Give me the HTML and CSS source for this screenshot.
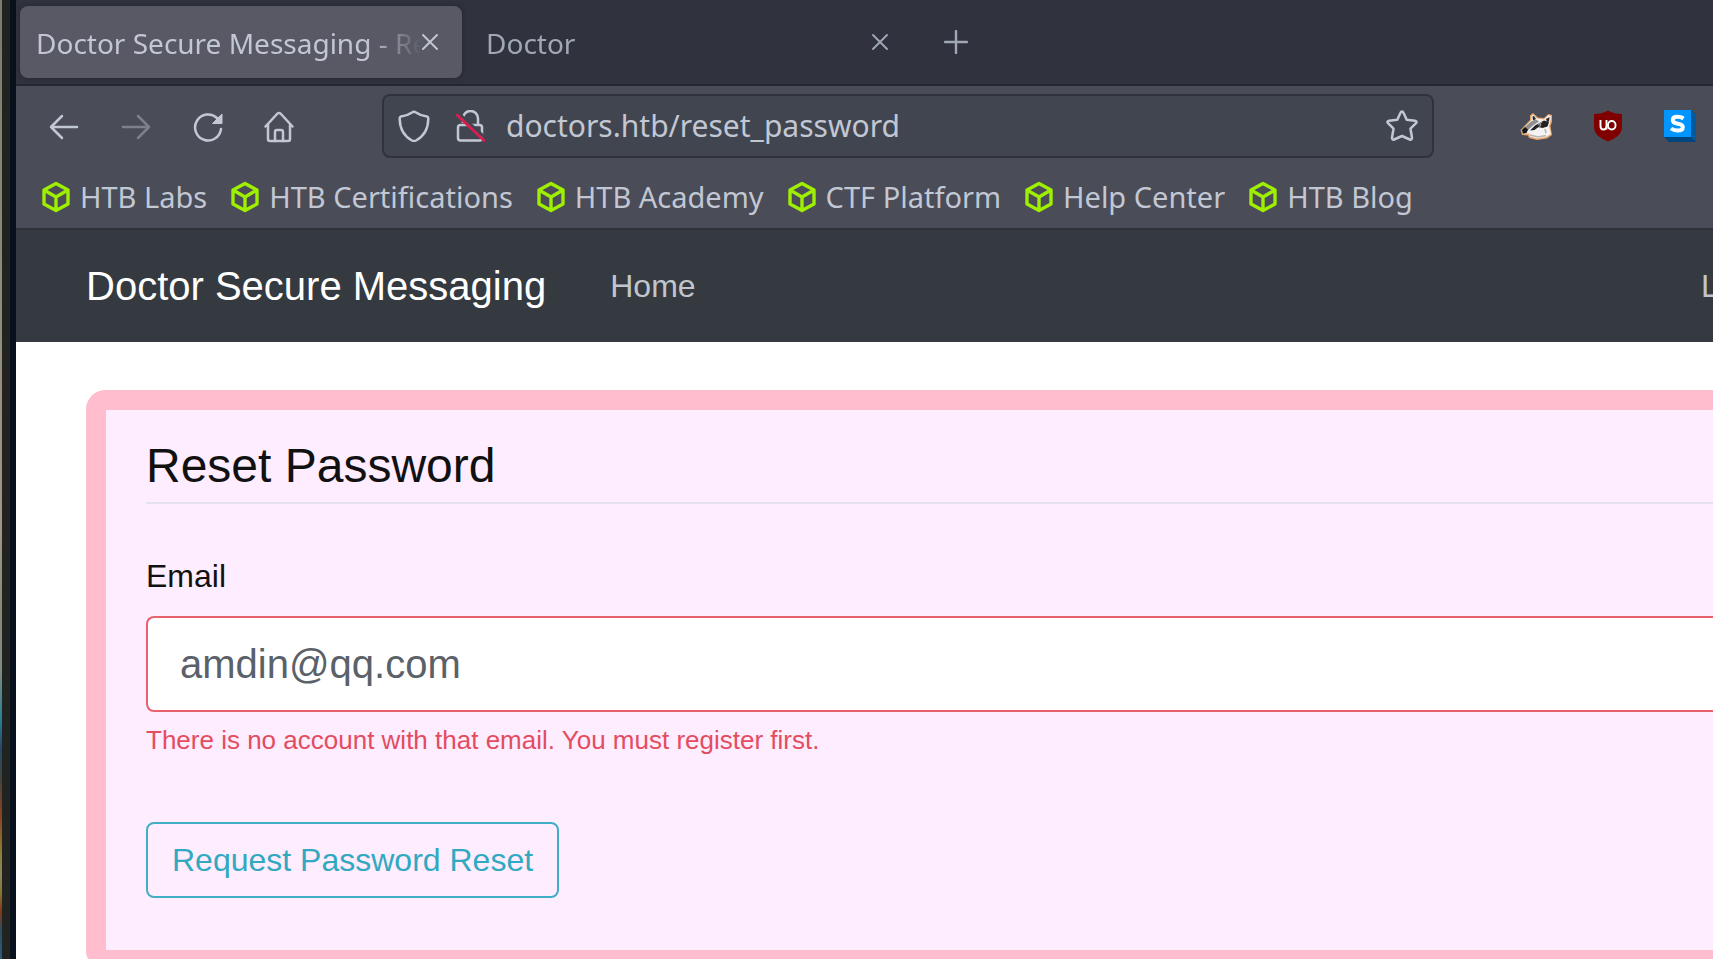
FILE: index.html
```html
<!DOCTYPE html>
<html lang="en">
<head>
<meta charset="utf-8">
<title>Doctor Secure Messaging - Reset Password</title>
<link rel="stylesheet" href="styles.css">
</head>
<body>
<svg class="defs" aria-hidden="true">
  <symbol id="cube" viewBox="0 0 32 32"><path d="M16 2.500 28 9v14L16 29.500 4 23V9zM4 9l12 7 12-7M16 16v13" fill="none" stroke="#9fef00" stroke-width="3.400" stroke-linejoin="round"/></symbol>
  <symbol id="cross" viewBox="0 0 16 16"><path d="M1 1l14 14M15 1L1 15" fill="none" stroke="currentColor" stroke-width="1.900" stroke-linecap="round"/></symbol>
</svg>
<div class="desktop">
  <div class="wallpaper"></div>
  <div class="bezel"></div>
  <div class="edge"></div>
  <div class="browser">
    <header class="tabs">
      <div class="tab tab-active">
        <span class="tab-title">Doctor Secure Messaging - Reset</span>
        <button class="icon-btn" aria-label="Close tab"><svg class="icon-x"><use href="#cross"/></svg></button>
      </div>
      <div class="tab">
        <span class="tab-title">Doctor</span>
        <button class="icon-btn" aria-label="Close tab"><svg class="icon-x"><use href="#cross"/></svg></button>
      </div>
      <button class="icon-btn new-tab" aria-label="New tab"><svg class="icon-plus" viewBox="0 0 24 24"><path d="M12 1v22M1 12h22" fill="none" stroke="currentColor" stroke-width="2.400" stroke-linecap="round"/></svg></button>
    </header>
    <div class="toolbar">
      <div class="nav-buttons">
        <button class="icon-btn" aria-label="Back"><svg class="icon" viewBox="0 0 32 32"><path d="M29 16H3M14 5 3 16l11 11" fill="none" stroke="currentColor" stroke-width="2.500" stroke-linecap="round" stroke-linejoin="round"/></svg></button>
        <button class="icon-btn dim" aria-label="Forward"><svg class="icon" viewBox="0 0 32 32"><path d="M3 16h26M18 5l11 11-11 11" fill="none" stroke="currentColor" stroke-width="2.500" stroke-linecap="round" stroke-linejoin="round"/></svg></button>
        <button class="icon-btn" aria-label="Reload"><svg class="icon" viewBox="0 0 32 32"><path d="M25 7A13 13 0 1 0 29 18" fill="none" stroke="currentColor" stroke-width="2.500" stroke-linecap="round"/><path d="M30 3v9.500H20.500z" fill="currentColor" stroke="currentColor" stroke-linejoin="round"/></svg></button>
        <button class="icon-btn" aria-label="Home"><svg class="icon" viewBox="0 0 32 32"><g fill="none" stroke="currentColor" stroke-width="2.500" stroke-linecap="round" stroke-linejoin="round"><path d="M1.500 15.500 13.500 2.500q1.500-1 3 0L28.500 15.500M4 13.500V28q0 2 2 2h18q2 0 2-2V13.500"/><path d="M11 30V21q0-2 2-2h4q2 0 2 2v9"/></g></svg></button>
      </div>
      <div class="urlbar">
        <svg class="icon shield" viewBox="0 0 32 32"><path d="M16 1.700q1 0 2 .800 5 3.500 11 4Q30.500 7 30.300 9 30 24 18 30.500q-2 1-4 0Q2 24 1.700 9 1.500 7 3 6.500q6-.500 11-4 1-.800 2-.800z" fill="none" stroke="currentColor" stroke-width="2.500"/></svg>
        <svg class="icon" viewBox="0 0 32 32"><g fill="none" stroke="currentColor" stroke-width="2.500" stroke-linejoin="round"><path d="M9 13V8.500a7.500 7.500 0 0 1 15 0V15"/><rect x="4" y="15" width="24" height="15.500" rx="2.500"/></g><path d="M5 3.500 32 28.500" stroke="#40454f" stroke-width="3"/><path d="M3 5 30 30.500" stroke="#d81e4f" stroke-width="2.800" stroke-linecap="round"/></svg>
        <input class="url" type="text" value="doctors.htb/reset_password" aria-label="Address">
        <button class="icon-btn" aria-label="Bookmark this page"><svg class="icon" viewBox="0 0 32 32"><path d="M16 1.500q1 0 1.500 1.200l3.200 7 8.300 1q2.500.600 1 2.500l-5.500 5.500 1.500 9q0 2.500-2.200 1.800L16 26l-7.800 3.500Q6 30.200 6 27.700l1.500-9L2 13.200q-1.500-1.900 1-2.500l8.300-1 3.200-7Q15 1.500 16 1.500z" fill="none" stroke="currentColor" stroke-width="2.500" stroke-linejoin="round"/></svg></button>
      </div>
      <div class="extensions">
        <button class="icon-btn" aria-label="Privacy Badger"><svg class="icon" viewBox="0 0 32 32">
          <path d="M.500 20 10 10V5.500L13 3l5 4.500 6 .500 4.500-4L32 5v7l-1.500 4L32 25l-5 3.500-10 1.500-8-2-1-2.500-6-.500z" fill="#e9a468"/>
          <path d="M2 20 11.500 10V6L13 4.500 17 8.500l7 1L28.500 5 31 6.500 30 13l-1 3 2 8-5 3-9 1.500-7-2-1-3-6 0z" fill="#f4f3f1"/>
          <path d="m2 20 9-8.500 5-2 3 2-6 4-5 4.500-3 3.500-2.500-.500z" fill="#8f8f8f"/>
          <path d="m2 20 3-3 3 2.500-1.500 3.500-3.500.500z" fill="#161616"/>
          <path d="m10 20.500 5-5 9-5 5 1.500-1.500 4.500-5 1.500-4-1-4 3z" fill="#222"/>
          <path d="m18 15 4-3M19 18l2-4" stroke="#9a9a9a" stroke-width="1.200"/>
          <path d="m12.500 6.500 1.500-.500 2 3-3 1.500zM26 9l3.500-2-.5 4.500-2 .500z" fill="#292929"/>
          <path d="m10 25 8 2 8-1.500M25 19l1 4" fill="none" stroke="#b9b6b2" stroke-width="1.600"/></svg></button>
        <button class="icon-btn" aria-label="uBlock Origin"><svg class="icon" viewBox="0 0 32 32"><path d="M16 .500Q22 4 30 4v13q0 9-14 14.500Q2 26 2 17V4q8 0 14-3.500z" fill="#800000"/><path d="M8.500 10v6q0 3.500 3 3.500t3-3.500v-6M14.500 16.500v3" fill="none" stroke="#fff" stroke-width="1.900"/><rect x="16" y="11" width="7.500" height="8.500" rx="3.700" fill="none" stroke="#fff" stroke-width="1.900"/></svg></button>
        <button class="icon-btn" aria-label="S extension"><svg class="icon" viewBox="0 0 32 32"><path d="M27 0l5 5v27H5l-5-5z" fill="#00457c"/><path d="M27 0l5 5v27l-5-5z" fill="#005b9e"/><path d="M0 0h27v27H0z" fill="#0095ff"/><path d="M19.500 8.500Q17 6.800 13.500 6.800 8.800 6.800 8.800 10t5 3.700q5 .600 5 3.500 0 3.300-5.300 3.300-3.800 0-6.500-2" fill="none" stroke="#fff" stroke-width="4"/></svg></button>
      </div>
    </div>
    <nav class="bookmarks" aria-label="Bookmarks">
      <a href="#"><svg class="icon"><use href="#cube"/></svg>HTB Labs</a>
      <a href="#"><svg class="icon"><use href="#cube"/></svg>HTB Certifications</a>
      <a href="#"><svg class="icon"><use href="#cube"/></svg>HTB Academy</a>
      <a href="#"><svg class="icon"><use href="#cube"/></svg>CTF Platform</a>
      <a href="#"><svg class="icon"><use href="#cube"/></svg>Help Center</a>
      <a href="#"><svg class="icon"><use href="#cube"/></svg>HTB Blog</a>
    </nav>
    <div class="page">
      <nav class="site-nav" aria-label="Main">
        <a class="brand" href="#">Doctor Secure Messaging</a>
        <a class="nav-link" href="#">Home</a>
        <a class="nav-link nav-login" href="#">Login</a>
      </nav>
      <main class="card">
        <form class="form">
          <h1 class="legend">Reset Password</h1>
          <label class="label" for="email">Email</label>
          <input class="field" id="email" type="text" value="amdin@qq.com" aria-describedby="email-error">
          <p class="error" id="email-error">There is no account with that email. You must register first.</p>
          <button class="submit" type="button">Request Password Reset</button>
        </form>
      </main>
    </div>
  </div>
</div>
</body>
</html>
```
FILE: styles.css
```css
* { box-sizing: border-box; }

body {
  margin: 0;
  height: 100vh;
  overflow: hidden;
  background: #fff;
}

a { text-decoration: none; }
button { font: inherit; cursor: pointer; }
svg { display: block; flex: none; }
.defs { position: absolute; width: 0; height: 0; }

.desktop { display: flex; height: 100%; }

.wallpaper {
  flex: 0 0 2px;
  background: linear-gradient(#7d7b6c, #8e8676 25%, #a09782 55%, #8d8877 63%, #7f8a80 70%, #2a8094 75%, #28476b 78%, #3c4540 81%, #8a4222 85%, #8d7f32 89%, #8a8560 91%, #887b30 93%, #85381c 95%, #2d4d60 97%, #2b5a80);
}
.bezel { flex: 0 0 8px; background: #202320; }
.edge { flex: 0 0 6px; background: #08111d; }

.browser {
  flex: 1;
  min-width: 0;
  display: flex;
  flex-direction: column;
  background: #fff;
  color: #c2c7d4;
  font: 28px/36px "Noto Sans", sans-serif;
}

.icon { width: 32px; height: 32px; }
.icon-x { width: 16px; height: 16px; }
.icon-plus { width: 24px; height: 24px; }
.icon-btn {
  flex: none;
  padding: 0;
  border: 0;
  background: none;
  color: inherit;
}
.dim { color: #7e808b; }

/* Tab strip */
.tabs {
  flex: none;
  display: flex;
  align-items: center;
  gap: 8px;
  height: 86px;
  padding: 0 4px;
  background: #30333e;
  border-bottom: 2px solid #252833;
  color: #a0a8b5;
}
.tab {
  display: flex;
  align-items: center;
  width: 442px;
  height: 72px;
  padding: 0 24px 0 16px;
  border-radius: 8px;
}
.tab-active {
  background: #585965;
  color: #c2c7d4;
  box-shadow: 0 0 4px #20232c;
}
.tab-title {
  flex: 1;
  overflow: hidden;
  padding-top: 2px;
  white-space: nowrap;
  mask-image: linear-gradient(to left, transparent, #000 56px);
}
.new-tab { margin-left: 24px; }

/* Toolbar */
.toolbar {
  flex: none;
  display: flex;
  align-items: center;
  height: 80px;
  padding: 0 17px 0 32px;
  background: #4a4c57;
}
.nav-buttons, .extensions { display: flex; gap: 40px; }
.nav-buttons { padding-top: 2px; }
.urlbar {
  flex: 1;
  display: flex;
  align-items: center;
  gap: 20px;
  height: 64px;
  margin: 0 86px;
  padding: 0 14px;
  border: 2px solid #30333e;
  border-radius: 8px;
  background: #40454f;
}
.shield { margin-right: 4px; }
.url {
  flex: 1;
  min-width: 0;
  margin: 0;
  padding: 0;
  border: 0;
  outline: 0;
  background: none;
  color: inherit;
  font: inherit;
  font-size: 30px;
}

.bookmarks {
  flex: none;
  display: flex;
  align-items: center;
  gap: 22px;
  height: 64px;
  padding: 0 24px;
  background: #4a4c57;
  border-bottom: 2px solid #30323d;
  font-size: 29px;
}
.bookmarks a {
  display: flex;
  align-items: center;
  gap: 8px;
  color: inherit;
  white-space: nowrap;
}

/* Site */
.page {
  flex: 1;
  min-height: 0;
  overflow: hidden;
  font: 32px/48px "Liberation Sans", sans-serif;
}
.site-nav {
  display: flex;
  align-items: center;
  height: 112px;
  padding-left: 70px;
  background: #343a40;
}
.brand {
  margin-right: 64px;
  color: #fff;
  font-size: 40px;
  white-space: nowrap;
}
.nav-link { color: #c0c6cc; }
.nav-login {
  width: 12px;
  margin-left: auto;
  overflow: hidden;
}

.card {
  margin: 48px 0 0 70px;
  border: 20px solid #ffbdcd;
  border-right: 0;
  border-radius: 20px 0 0 20px;
  background: #feecff;
  color: #111;
}
.form { padding: 26px 0 52px 40px; }
.legend {
  margin: 0 0 48px;
  padding-bottom: 6px;
  border-bottom: 2px solid #e3e2ec;
  font-size: 48px;
  font-weight: 400;
  line-height: 60px;
}
.label { display: block; margin-bottom: 16px; }
.field {
  display: block;
  width: 100%;
  height: 96px;
  margin: 0;
  padding: 0 32px;
  border: 2px solid #e8616f;
  border-right: 0;
  border-radius: 8px 0 0 8px;
  outline: 0;
  background: #fff;
  color: #5a6169;
  font: 40px/60px "Liberation Sans", sans-serif;
}
.error {
  margin: 8px 0 62px;
  color: #e34d5f;
  font-size: 26px;
  line-height: 40px;
}
.submit {
  display: block;
  height: 76px;
  padding: 0 24px;
  border: 2px solid #40afc4;
  border-radius: 8px;
  background: none;
  color: #31a9c0;
}
```
